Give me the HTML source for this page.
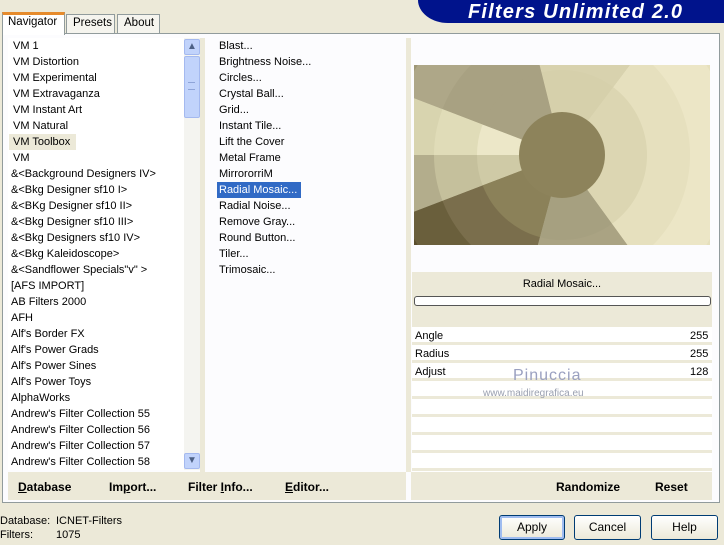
<!DOCTYPE html>
<html><head><style>
*{margin:0;padding:0;box-sizing:border-box}
body{width:724px;height:545px;background:#ece9d8;font-family:"Liberation Sans",sans-serif;font-size:12px;color:#000;position:relative;overflow:hidden}
.a{position:absolute}
.it{position:absolute;white-space:nowrap;line-height:16px;font-size:11px}
.btn{position:absolute;border:1px solid #003c74;border-radius:3px;background:linear-gradient(#fff,#ece9d8);text-align:center;line-height:23px;font-size:12px}
.b{font-weight:bold;font-size:12px;position:absolute}
</style></head><body>
<div class="a" style="left:418px;top:0;width:306px;height:23px;background:#00138c;border-bottom-left-radius:30px 23px"></div>
<div class="a" style="left:468px;top:1px;font:italic bold 20px 'Liberation Sans',sans-serif;color:#fff;letter-spacing:1.2px">Filters Unlimited 2.0</div>
<div class="a" style="left:2px;top:12px;width:63px;height:23px;background:#fff;border:1px solid #919b9c;border-bottom:none;border-top:3px solid #e68b2c;z-index:2"></div>
<div class="a" style="left:8px;top:16px;z-index:3;font-size:11.5px">Navigator</div>
<div class="a" style="left:66px;top:14px;width:49px;height:19px;background:#f5f4ee;border:1px solid #919b9c;border-bottom:none"></div>
<div class="a" style="left:73px;top:17px;font-size:11.5px">Presets</div>
<div class="a" style="left:117px;top:14px;width:43px;height:19px;background:#f5f4ee;border:1px solid #919b9c;border-bottom:none"></div>
<div class="a" style="left:124px;top:17px;font-size:11.5px">About</div>
<div class="a" style="left:2px;top:33px;width:718px;height:470px;background:#fcfcfe;border:1px solid #919b9c"></div>
<div class="a" style="left:8px;top:38px;width:192px;height:432px;background:#fff"></div>
<div class="a" style="left:200px;top:38px;width:5px;height:434px;background:#ece9d8"></div>
<div class="a" style="left:406px;top:38px;width:5px;height:434px;background:#ece9d8"></div>
<div class="a" style="left:184px;top:38px;width:16px;height:432px;background:#f4f4f0"></div>
<div class="a" style="left:184px;top:39px;width:16px;height:16px;background:#c1d3fb;border:1px solid #a4b9ef;border-radius:2px;text-align:center;font-size:10px;line-height:14px;color:#4d6185">&#9650;</div>
<div class="a" style="left:184px;top:56px;width:16px;height:62px;background:#c1d3fb;border:1px solid #a4b9ef;border-radius:2px"></div>
<div class="a" style="left:188px;top:82px;width:7px;height:8px;border-top:1px solid #8ea4d8;border-bottom:1px solid #8ea4d8"></div>
<div class="a" style="left:184px;top:453px;width:16px;height:16px;background:#c1d3fb;border:1px solid #a4b9ef;border-radius:2px;text-align:center;font-size:10px;line-height:14px;color:#4d6185">&#9660;</div>
<div class="a" style="left:9px;top:134px;width:67px;height:16px;background:#ece9d8"></div>
<div class="it" style="left:13px;top:38px">VM 1</div>
<div class="it" style="left:13px;top:54px">VM Distortion</div>
<div class="it" style="left:13px;top:70px">VM Experimental</div>
<div class="it" style="left:13px;top:86px">VM Extravaganza</div>
<div class="it" style="left:13px;top:102px">VM Instant Art</div>
<div class="it" style="left:13px;top:118px">VM Natural</div>
<div class="it" style="left:13px;top:134px">VM Toolbox</div>
<div class="it" style="left:13px;top:150px">VM</div>
<div class="it" style="left:11px;top:166px">&amp;&lt;Background Designers IV&gt;</div>
<div class="it" style="left:11px;top:182px">&amp;&lt;Bkg Designer sf10 I&gt;</div>
<div class="it" style="left:11px;top:198px">&amp;&lt;BKg Designer sf10 II&gt;</div>
<div class="it" style="left:11px;top:214px">&amp;&lt;Bkg Designer sf10 III&gt;</div>
<div class="it" style="left:11px;top:230px">&amp;&lt;Bkg Designers sf10 IV&gt;</div>
<div class="it" style="left:11px;top:246px">&amp;&lt;Bkg Kaleidoscope&gt;</div>
<div class="it" style="left:11px;top:262px">&amp;&lt;Sandflower Specials"v" &gt;</div>
<div class="it" style="left:11px;top:278px">[AFS IMPORT]</div>
<div class="it" style="left:11px;top:294px">AB Filters 2000</div>
<div class="it" style="left:11px;top:310px">AFH</div>
<div class="it" style="left:11px;top:326px">Alf's Border FX</div>
<div class="it" style="left:11px;top:342px">Alf's Power Grads</div>
<div class="it" style="left:11px;top:358px">Alf's Power Sines</div>
<div class="it" style="left:11px;top:374px">Alf's Power Toys</div>
<div class="it" style="left:11px;top:390px">AlphaWorks</div>
<div class="it" style="left:11px;top:406px">Andrew's Filter Collection 55</div>
<div class="it" style="left:11px;top:422px">Andrew's Filter Collection 56</div>
<div class="it" style="left:11px;top:438px">Andrew's Filter Collection 57</div>
<div class="it" style="left:11px;top:454px">Andrew's Filter Collection 58</div>
<div class="a" style="left:217px;top:182px;width:84px;height:16px;background:#316ac5"></div>
<div class="it" style="left:219px;top:38px">Blast...</div>
<div class="it" style="left:219px;top:54px">Brightness Noise...</div>
<div class="it" style="left:219px;top:70px">Circles...</div>
<div class="it" style="left:219px;top:86px">Crystal Ball...</div>
<div class="it" style="left:219px;top:102px">Grid...</div>
<div class="it" style="left:219px;top:118px">Instant Tile...</div>
<div class="it" style="left:219px;top:134px">Lift the Cover</div>
<div class="it" style="left:219px;top:150px">Metal Frame</div>
<div class="it" style="left:219px;top:166px">MirrororriM</div>
<div class="it" style="left:219px;top:182px;color:#fff">Radial Mosaic...</div>
<div class="it" style="left:219px;top:198px">Radial Noise...</div>
<div class="it" style="left:219px;top:214px">Remove Gray...</div>
<div class="it" style="left:219px;top:230px">Round Button...</div>
<div class="it" style="left:219px;top:246px">Tiler...</div>
<div class="it" style="left:219px;top:262px">Trimosaic...</div>
<svg class="a" style="left:414px;top:65px" width="296" height="180" viewBox="0 0 296 180">
<defs>
<path id="A" d="M0,0L.602,-.799A1,1 0 0 1 .588,.809Z"/>
<path id="B" d="M0,0L-.242,-.970A1,1 0 0 1 .602,-.799Z"/>
<path id="C" d="M0,0L-.934,-.358A1,1 0 0 1 -.242,-.970Z"/>
<path id="D" d="M0,0L-1,0A1,1 0 0 1 -.934,-.358Z"/>
<path id="E" d="M0,0L-.934,.358A1,1 0 0 1 -1,0Z"/>
<path id="F" d="M0,0L-.259,.966A1,1 0 0 1 -.934,.358Z"/>
<path id="G" d="M0,0L.588,.809A1,1 0 0 1 -.259,.966Z"/>
</defs>
<g transform="translate(148,90)">
<g transform="scale(400)"><use href="#A" fill="#e6e0bd"/><use href="#B" fill="#a59e7e"/><use href="#C" fill="#9e9776"/><use href="#D" fill="#b8b292"/><use href="#E" fill="#9a9372"/><use href="#F" fill="#5a4e2c"/><use href="#G" fill="#b0aa88"/></g>
<g transform="scale(170)"><use href="#A" fill="#ece6c6"/><use href="#B" fill="#c9c39f"/><use href="#C" fill="#aea788"/><use href="#D" fill="#d8d4af"/><use href="#E" fill="#b3ad8c"/><use href="#F" fill="#6a5f3c"/><use href="#G" fill="#b0aa88"/></g>
<g transform="scale(128)"><use href="#A" fill="#e6e0be"/><use href="#B" fill="#d8d2ae"/><use href="#C" fill="#a8a182"/><use href="#D" fill="#e0dcb8"/><use href="#E" fill="#c5c09c"/><use href="#F" fill="#7a6e4c"/><use href="#G" fill="#aaa383"/></g>
<g transform="scale(85)"><use href="#A" fill="#dcd6b2"/><use href="#B" fill="#d6d0ab"/><use href="#C" fill="#a8a182"/><use href="#D" fill="#ece7c8"/><use href="#E" fill="#cfcaa6"/><use href="#F" fill="#8b8159"/><use href="#G" fill="#a6a080"/></g>
<circle r="43" fill="#8d835b"/>
</g></svg>
<div class="a" style="left:412px;top:272px;width:300px;height:24px;background:#ece9d8;text-align:center;line-height:24px;font-size:11px">Radial Mosaic...</div>
<div class="a" style="left:412px;top:296px;width:300px;height:31px;background:#ece9d8"></div>
<div class="a" style="left:414px;top:296px;width:297px;height:10px;background:#fff;border:1px solid #555;border-radius:3px"></div>
<div class="a" style="left:412px;top:327px;width:300px;height:145px;background:repeating-linear-gradient(#fff 0 15px,#ece9d8 15px 18px)"></div>
<div class="it" style="left:415px;top:328px">Angle</div><div class="it" style="left:690px;top:328px">255</div>
<div class="it" style="left:415px;top:346px">Radius</div><div class="it" style="left:690px;top:346px">255</div>
<div class="it" style="left:415px;top:364px">Adjust</div><div class="it" style="left:690px;top:364px">128</div>
<div class="a" style="left:513px;top:367px;font-size:16px;color:#9aa0c0;letter-spacing:1px">Pinuccia</div>
<div class="a" style="left:483px;top:388px;font-size:10px;color:#9aa0b0">www.maidiregrafica.eu</div>
<div class="a" style="left:8px;top:472px;width:398px;height:28px;background:#ece9d8"></div>
<div class="a" style="left:411px;top:472px;width:301px;height:28px;background:#ece9d8"></div>
<div class="b" style="left:18px;top:480px"><u>D</u>atabase</div>
<div class="b" style="left:109px;top:480px">Im<u>p</u>ort...</div>
<div class="b" style="left:188px;top:480px">Filter <u>I</u>nfo...</div>
<div class="b" style="left:285px;top:480px"><u>E</u>ditor...</div>
<div class="b" style="left:556px;top:480px">Randomize</div>
<div class="b" style="left:655px;top:480px">Reset</div>
<div class="a" style="left:0;top:515px;font-size:11px">Database:</div>
<div class="a" style="left:56px;top:515px;font-size:11px">ICNET-Filters</div>
<div class="a" style="left:0;top:529px;font-size:11px">Filters:</div>
<div class="a" style="left:56px;top:529px;font-size:11px">1075</div>
<div class="btn" style="left:499px;top:515px;width:66px;height:25px;box-shadow:inset 0 0 0 2px #9fbcf0">Apply</div>
<div class="btn" style="left:574px;top:515px;width:67px;height:25px">Cancel</div>
<div class="btn" style="left:651px;top:515px;width:67px;height:25px">Help</div>
</body></html>
